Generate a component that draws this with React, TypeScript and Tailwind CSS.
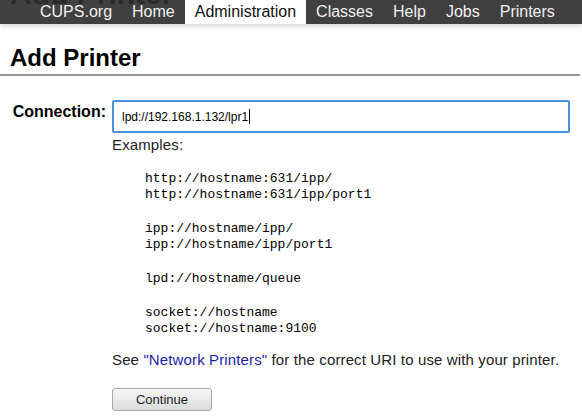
import React from 'react';

const navItems = ['CUPS.org', 'Home', 'Administration', 'Classes', 'Help', 'Jobs', 'Printers'];

const examples = [
  ['http://hostname:631/ipp/', 'http://hostname:631/ipp/port1'],
  ['ipp://hostname/ipp/', 'ipp://hostname/ipp/port1'],
  ['lpd://hostname/queue'],
  ['socket://hostname', 'socket://hostname:9100'],
];

export default function App() {
  return (
    <div className="w-[582px] h-[416px] overflow-hidden bg-white font-['Liberation_Sans',Arial,sans-serif] text-[#222]">
      {/* Nav bar */}
      <div className="relative h-[24px] bg-[#404040] shadow-[0_2px_6px_rgba(0,0,0,0.18)] overflow-hidden">
        <span className="absolute left-[10px] top-[-21px] text-[30px] font-bold leading-none text-[#2a2a2a] select-none">
          Add Printer
        </span>
        <ul className="relative flex h-full pl-[30px] text-[16px] leading-[24px]">
          {navItems.map((item) => (
            <li
              key={item}
              className={
                item === 'Administration'
                  ? 'px-[10px] bg-white text-[#111]'
                  : 'px-[10px] text-[#f0f0f0]'
              }
            >
              {item}
            </li>
          ))}
        </ul>
      </div>

      {/* Title */}
      <div className="mt-[19px] border-b-2 border-[#999] w-[580px]">
        <h2 className="pl-[10px] pb-[2px] text-[24px] font-bold leading-[29px] text-black">Add Printer</h2>
      </div>

      {/* Form */}
      <div className="mt-[24px] flex">
        <div className="w-[112px] pr-[6px] pt-[2px] text-right text-[16px] font-bold text-black leading-[20px]">
          Connection:
        </div>
        <div className="flex flex-col">
          <div className="w-[458px] h-[33px] border-2 border-[#4a8fd9] rounded-[2px] flex items-center pl-[8px] text-[12px] text-black">
            <span>lpd://192.168.1.132/lpr1</span>
            <span className="ml-[1px] w-px h-[15px] bg-black" />
          </div>
          <div className="mt-[3px] text-[15px] leading-[18px] tracking-[0.13px] text-[#222]">Examples:</div>
          <div className="mt-[17px] ml-[33px] font-['Liberation_Mono','Courier_New',monospace] text-[13px] leading-[16px] text-black flex flex-col gap-[18px]">
            {examples.map((group, i) => (
              <div key={i}>
                {group.map((line) => (
                  <div key={line}>{line}</div>
                ))}
              </div>
            ))}
          </div>
          <p className="mt-[14px] text-[15px] leading-[18px] tracking-[0.13px] text-[#222]">
            See <a className="text-[#1c1ca8]">"Network Printers"</a> for the correct URI to use with your printer.
          </p>
          <button className="mt-[19px] w-[100px] h-[23px] rounded-[3px] border border-[#a8a8a8] bg-gradient-to-b from-[#f6f6f6] to-[#dcdcdc] text-[13px] text-[#222]">
            Continue
          </button>
        </div>
      </div>
    </div>
  );
}
